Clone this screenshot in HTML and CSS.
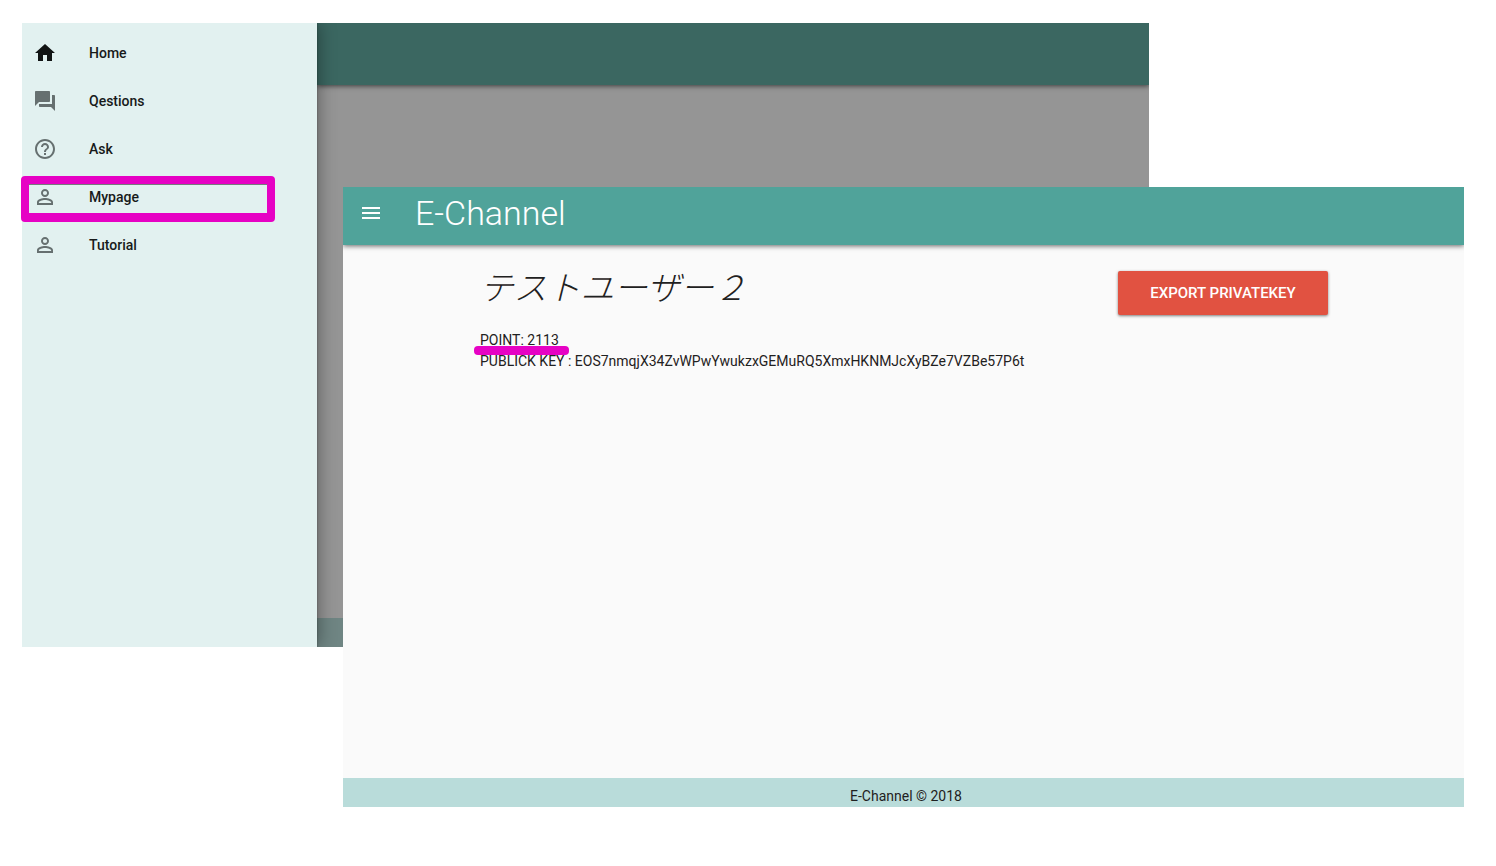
FILE: index.html
```html
<!DOCTYPE html>
<html lang="ja">
<head>
<meta charset="utf-8">
<title>E-Channel</title>
<link rel="stylesheet" href="styles.css">
</head>
<body>
<main class="desktop">
  <section class="window window-menu">
    <nav class="drawer">
      <a class="item"><svg class="icon icon-active" viewBox="0 0 24 24"><path d="M10 20v-6h4v6h5v-8h3L12 3 2 12h3v8z"/></svg><span>Home</span></a>
      <a class="item"><svg class="icon" viewBox="0 0 24 24"><path d="M21 6h-2v9H6v2c0 .55.45 1 1 1h11l4 4V7c0-.55-.45-1-1-1zm-4 6V3c0-.55-.45-1-1-1H3c-.55 0-1 .45-1 1v14l4-4h10c.55 0 1-.45 1-1z"/></svg><span>Qestions</span></a>
      <a class="item"><svg class="icon" viewBox="0 0 24 24"><path d="M11 18h2v-2h-2v2zm1-16C6.480 2 2 6.480 2 12s4.480 10 10 10 10-4.480 10-10S17.520 2 12 2zm0 18c-4.410 0-8-3.590-8-8s3.590-8 8-8 8 3.590 8 8-3.590 8-8 8zm0-14c-2.210 0-4 1.790-4 4h2c0-1.100.9-2 2-2s2 .9 2 2c0 2-3 1.750-3 5h2c0-2.250 3-2.500 3-5 0-2.210-1.790-4-4-4z"/></svg><span>Ask</span></a>
      <a class="item"><svg class="icon" viewBox="0 0 24 24"><path d="M12 5.900a2.100 2.100 0 1 1 0 4.200 2.100 2.100 0 0 1 0-4.200m0 9c2.970 0 6.100 1.460 6.100 2.100v1.100H5.900V17c0-.64 3.130-2.100 6.100-2.100M12 4C9.790 4 8 5.790 8 8s1.790 4 4 4 4-1.790 4-4-1.790-4-4-4zm0 9c-2.670 0-8 1.340-8 4v3h16v-3c0-2.660-5.330-4-8-4z"/></svg><span>Mypage</span></a>
      <a class="item"><svg class="icon" viewBox="0 0 24 24"><path d="M12 5.900a2.100 2.100 0 1 1 0 4.200 2.100 2.100 0 0 1 0-4.200m0 9c2.970 0 6.100 1.460 6.100 2.100v1.100H5.900V17c0-.64 3.130-2.100 6.100-2.100M12 4C9.790 4 8 5.790 8 8s1.790 4 4 4 4-1.790 4-4-1.790-4-4-4zm0 9c-2.670 0-8 1.340-8 4v3h16v-3c0-2.660-5.330-4-8-4z"/></svg><span>Tutorial</span></a>
    </nav>
    <div class="backdrop">
      <div class="dim-header"></div>
      <div class="dim-body"></div>
      <div class="dim-footer"></div>
    </div>
  </section>
  <div class="highlight-box"></div>

  <section class="window window-page">
    <header class="appbar">
      <svg class="menu" viewBox="0 0 24 24"><path d="M3 18h18v-2H3v2zm0-5h18v-2H3v2zm0-7v2h18V6H3z"/></svg>
      <span class="brand">E-Channel</span>
    </header>
    <div class="content">
      <div class="profile">
        <h1 class="username">テストユーザー２</h1>
        <p class="line point">POINT: 2113</p>
        <p class="line key">PUBLICK KEY : EOS7nmqjX34ZvWPwYwukzxGEMuRQ5XmxHKNMJcXyBZe7VZBe57P6t</p>
      </div>
      <button class="export">EXPORT PRIVATEKEY</button>
    </div>
    <footer class="footer">E-Channel © 2018</footer>
  </section>
  <div class="underline"></div>
</main>
</body>
</html>
```

FILE: styles.css
```css
* { box-sizing: border-box; }
body { margin: 0; background: #fff; font-family: Roboto, "Noto Sans CJK JP", sans-serif; color: #1f2121; }
.desktop { position: relative; width: 1496px; height: 866px; overflow: hidden; }
.window { position: absolute; display: flex; overflow: hidden; isolation: isolate; }
.window-menu { left: 22px; top: 23px; width: 1127px; height: 624px; }
.drawer { position: relative; z-index: 1; width: 295px; padding-top: 6px; background: #e2f1f0; box-shadow: 0 0 2px rgba(0,0,0,.3), 2px 0 16px rgba(0,0,0,.35); }
.item { display: flex; align-items: center; height: 48px; padding-left: 11px; gap: 32px; font-size: 14px; font-weight: 500; color: #171a1a; }
.icon { width: 24px; height: 24px; fill: #667070; }
.icon-active { fill: #111414; }
.backdrop { flex: 1; display: flex; flex-direction: column; background: #959595; }
.dim-header { height: 62px; background: #3b6761; box-shadow: 0 1px 5px rgba(0,0,0,.6); }
.dim-body { flex: 1; }
.dim-footer { height: 29px; background: #6f8583; }
.highlight-box { position: absolute; left: 21px; top: 176px; width: 254px; height: 46px; border: 8px solid #e602c4; border-bottom-width: 9px; border-radius: 4px; box-shadow: inset 0 1px 0 #747d7c; }
.window-page { left: 343px; top: 187px; width: 1121px; height: 620px; flex-direction: column; background: #fafafa; }
.appbar { display: flex; align-items: center; height: 58px; flex: none; padding: 0 0 6px 16px; gap: 32px; background: #50a39a; box-shadow: 0 1px 5px rgba(0,0,0,.6); }
.menu { width: 24px; height: 24px; fill: #fff; }
.brand { font-size: 34px; font-weight: 300; color: #fff; line-height: 38px; }
.content { flex: 1; display: flex; justify-content: space-between; align-items: flex-start; padding: 26px 136px 0 137px; }
.username { margin: -3px 0 26px; font: italic 300 33.500px/36px "Noto Sans CJK JP", sans-serif; }
.line { margin: 0; font-size: 14px; line-height: 21px; white-space: nowrap; }
.export { width: 210px; height: 44px; padding: 0; border: 0; border-radius: 2px; background: #e15241; color: #fff; font: 500 15px Roboto, sans-serif; box-shadow: 0 1px 3px rgba(0,0,0,.5); }
.footer { height: 29px; padding: 7px 0 0 5px; background: #b9dcda; text-align: center; font-size: 14px; line-height: 22px; }
.underline { position: absolute; left: 474px; top: 346px; width: 95px; height: 9px; border-radius: 4px; background: #e602c4; }
```
